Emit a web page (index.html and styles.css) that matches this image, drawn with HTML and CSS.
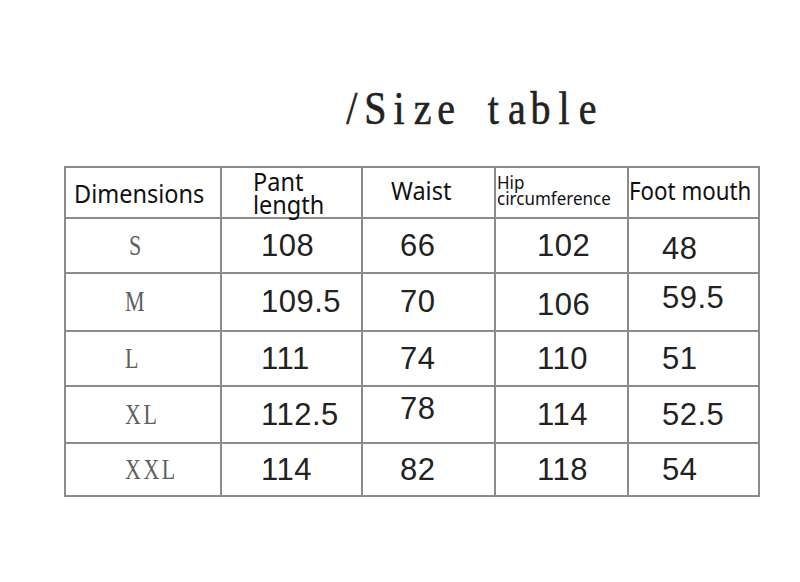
FILE: index.html
```html
<!DOCTYPE html>
<html lang="en">
<head>
<meta charset="utf-8">
<title>Size table</title>
<link rel="stylesheet" href="styles.css">
</head>
<body>
<div class="page">
  <div class="top">
    <h1 class="title"><span class="ch">/</span><span class="ch">S</span><span class="ch">i</span><span class="ch">z</span><span class="ch">e</span><span class="ch"> </span><span class="ch">t</span><span class="ch">a</span><span class="ch">b</span><span class="ch">l</span><span class="ch">e</span></h1>
  </div>
  <div class="table">
    <div class="cell head c1"><span class="ht">Dimensions</span></div>
    <div class="cell head c2"><span class="ht two">Pant<br>length</span></div>
    <div class="cell head c3 up3"><span class="ht">Waist</span></div>
    <div class="cell head c4 up2"><span class="ht small">Hip<br>circumference</span></div>
    <div class="cell head c5 up2"><span class="ht">Foot mouth</span></div>

    <div class="cell size c1"><span class="st s-pad">S</span></div>
    <div class="cell num c2"><span>108</span></div>
    <div class="cell num c3"><span>66</span></div>
    <div class="cell num c4"><span>102</span></div>
    <div class="cell num c5 dn3"><span>48</span></div>

    <div class="cell size c1"><span class="st">M</span></div>
    <div class="cell num c2"><span>109.5</span></div>
    <div class="cell num c3"><span>70</span></div>
    <div class="cell num c4 dn3"><span>106</span></div>
    <div class="cell num c5 up4"><span>59.5</span></div>

    <div class="cell size c1"><span class="st">L</span></div>
    <div class="cell num c2"><span>111</span></div>
    <div class="cell num c3"><span>74</span></div>
    <div class="cell num c4"><span>110</span></div>
    <div class="cell num c5"><span>51</span></div>

    <div class="cell size c1"><span class="st">XL</span></div>
    <div class="cell num c2"><span>112.5</span></div>
    <div class="cell num c3 up6"><span>78</span></div>
    <div class="cell num c4"><span>114</span></div>
    <div class="cell num c5"><span>52.5</span></div>

    <div class="cell size c1"><span class="st">XXL</span></div>
    <div class="cell num c2"><span>114</span></div>
    <div class="cell num c3"><span>82</span></div>
    <div class="cell num c4"><span>118</span></div>
    <div class="cell num c5"><span>54</span></div>
  </div>
</div>
</body>
</html>
```

FILE: styles.css
```css
html, body {
  margin: 0;
  padding: 0;
  background: #ffffff;
}

.page {
  width: 800px;
  height: 582px;
  overflow: hidden;
}

.top {
  height: 166px;
  box-sizing: border-box;
  padding-top: 84px;
  padding-left: 340px;
}

.title {
  margin: 0;
  display: flex;
  font-family: "Liberation Serif", "Times New Roman", serif;
  font-weight: normal;
  font-size: 40px;
  line-height: 50px;
  color: #222222;
  -webkit-text-stroke: 0.5px #222222;
}

.ch {
  display: inline-block;
  width: 23.6px;
  text-align: center;
  white-space: pre;
  transform: scaleY(1.15);
}

.table {
  margin-left: 64px;
  width: 696px;
  box-sizing: border-box;
  display: grid;
  grid-template-columns: 154px 139px 131px 131px 129px;
  grid-template-rows: 49px 53px 56px 53px 55px 51px;
  gap: 2px;
  padding: 2px;
  background: #8c8c8c;
}

.cell {
  background: #ffffff;
  display: flex;
  align-items: center;
  box-sizing: border-box;
}

.head {
  font-family: "Noto Sans", "Open Sans", sans-serif;
  font-size: 23.5px;
  color: #111111;
  line-height: 26px;
}

.ht {
  display: inline-block;
  transform: scaleY(1.1);
}

.head .two {
  line-height: 21px;
}

.head .small {
  font-size: 17px;
  line-height: 14.5px;
}

.size {
  font-family: "Liberation Serif", "Times New Roman", serif;
  font-size: 22px;
  letter-spacing: 2.5px;
  color: #5e5e5e;
  padding-left: 59px;
}

.st {
  display: inline-block;
  transform: scaleY(1.35);
}

.size .s-pad {
  margin-left: 4px;
}

.num {
  font-family: "Liberation Sans", Arial, sans-serif;
  font-size: 31px;
  letter-spacing: 0.5px;
  color: #222222;
}

.head.c1 { padding-left: 8px; }
.head.c2 { padding-left: 31px; }
.head.c3 { padding-left: 28px; }
.head.c4 { padding-left: 1px; }
.head.c5 { padding-left: 0; font-size: 22.3px; }

.num.c2 { padding-left: 39px; }
.num.c3 { padding-left: 37px; }
.num.c4 { padding-left: 41px; }
.num.c5 { padding-left: 33px; }

.up2 { padding-bottom: 4px; }
.up3 { padding-bottom: 6px; }
.up4 { padding-bottom: 8px; }
.up6 { padding-bottom: 12px; }
.dn3 { padding-top: 6px; }
```
